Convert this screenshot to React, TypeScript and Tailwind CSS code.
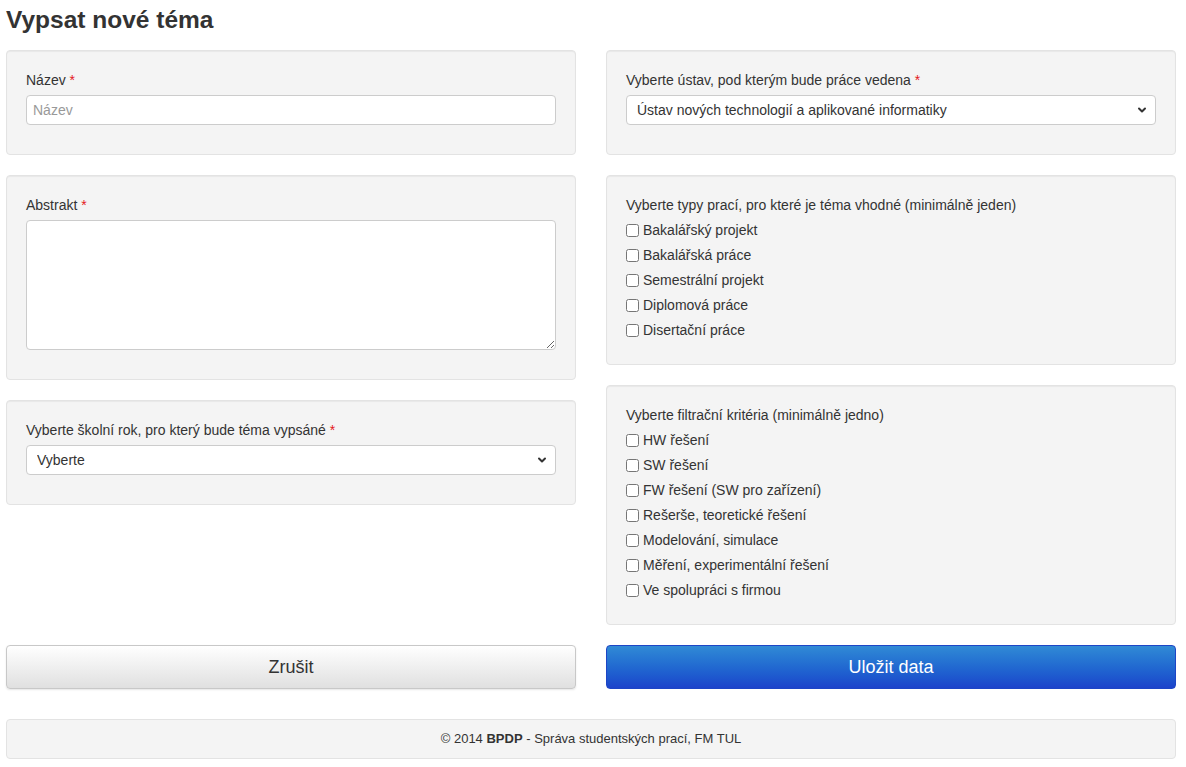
import React from "react";

const typyPraci = [
  "Bakalářský projekt",
  "Bakalářská práce",
  "Semestrální projekt",
  "Diplomová práce",
  "Disertační práce",
];

const kriteria = [
  "HW řešení",
  "SW řešení",
  "FW řešení (SW pro zařízení)",
  "Rešerše, teoretické řešení",
  "Modelování, simulace",
  "Měření, experimentální řešení",
  "Ve spolupráci s firmou",
];

function Well({ children }: { children: React.ReactNode }) {
  return (
    <div className="rounded-[4px] border border-[#e3e3e3] bg-[#f4f4f4] p-[19px] shadow-[inset_0_1px_1px_rgba(0,0,0,0.05)]">
      {children}
    </div>
  );
}

function Label({ text, required }: { text: string; required?: boolean }) {
  return (
    <div className="mb-[5px] h-5 leading-5">
      {text}
      {required && <span className="text-[#e4191c]"> *</span>}
    </div>
  );
}

function Select({ value }: { value: string }) {
  return (
    <div className="relative mb-[10px]">
      <select className="block h-[30px] w-full appearance-none rounded-[4px] border border-[#cccccc] bg-white pl-[10px] pr-8 text-[14px] text-[#333]">
        <option>{value}</option>
      </select>
      <svg
        className="pointer-events-none absolute right-[9px] top-[11px]"
        width="10"
        height="8"
        viewBox="0 0 10 8"
        fill="none"
        stroke="#333"
        strokeWidth="2"
        strokeLinecap="round"
        strokeLinejoin="round"
      >
        <path d="M2 2.5l3 3 3-3" />
      </svg>
    </div>
  );
}

function CheckList({ items }: { items: string[] }) {
  return (
    <div className="flex flex-col gap-[5px] pb-[5px]">
      {items.map((item) => (
        <label key={item} className="flex h-5 items-center leading-5">
          <input
            type="checkbox"
            className="m-0 mr-[4px] h-[13px] w-[13px] accent-[#333]"
          />
          {item}
        </label>
      ))}
    </div>
  );
}

export default function App() {
  return (
    <div
      className="min-h-screen bg-white pl-[6px] text-[14px] text-[#333]"
      style={{ fontFamily: '"Liberation Sans", Arial, sans-serif' }}
    >
      <h1 className="h-[50px] pt-[5px] text-[24.5px] font-bold leading-[30px] text-[#333]">
        Vypsat nové téma
      </h1>

      <div className="grid w-[1170px] grid-cols-[570px_570px] gap-x-[30px]">
        {/* levý sloupec */}
        <div className="flex flex-col gap-5">
          <Well>
            <Label text="Název" required />
            <input
              type="text"
              placeholder="Název"
              className="mb-[10px] block h-[30px] w-full rounded-[4px] border border-[#cccccc] bg-white px-[6px] text-[14px] placeholder:text-[#999]"
            />
          </Well>
          <Well>
            <Label text="Abstrakt" required />
            <textarea className="mb-[10px] block h-[130px] w-full resize-y rounded-[4px] border border-[#cccccc] bg-white px-[6px] text-[14px]" />
          </Well>
          <Well>
            <Label text="Vyberte školní rok, pro který bude téma vypsáné" required />
            <Select value="Vyberte" />
          </Well>
        </div>

        {/* pravý sloupec */}
        <div className="flex flex-col gap-5">
          <Well>
            <Label text="Vyberte ústav, pod kterým bude práce vedena" required />
            <Select value="Ústav nových technologií a aplikované informatiky" />
          </Well>
          <Well>
            <Label text="Vyberte typy prací, pro které je téma vhodné (minimálně jeden)" />
            <CheckList items={typyPraci} />
          </Well>
          <Well>
            <Label text="Vyberte filtrační kritéria (minimálně jedno)" />
            <CheckList items={kriteria} />
          </Well>
        </div>

        {/* tlačítka */}
        <button className="mt-5 h-[44px] rounded-[4px] border border-[#c8c8c8] bg-gradient-to-b from-white to-[#e0e0e0] text-[18px] text-[#333] shadow-[0_1px_2px_rgba(0,0,0,0.1)]">
          Zrušit
        </button>
        <button className="mt-5 h-[44px] rounded-[4px] border border-[#1d45c6] bg-gradient-to-b from-[#318ad5] to-[#1d43cb] text-[18px] text-white">
          Uložit data
        </button>
      </div>

      <div className="mt-[30px] flex h-10 w-[1170px] items-center justify-center rounded-[4px] border border-[#e3e3e3] bg-[#f4f4f4] text-[13px]">
        © 2014&nbsp;<b>BPDP</b>&nbsp;- Správa studentských prací, FM TUL
      </div>
    </div>
  );
}
